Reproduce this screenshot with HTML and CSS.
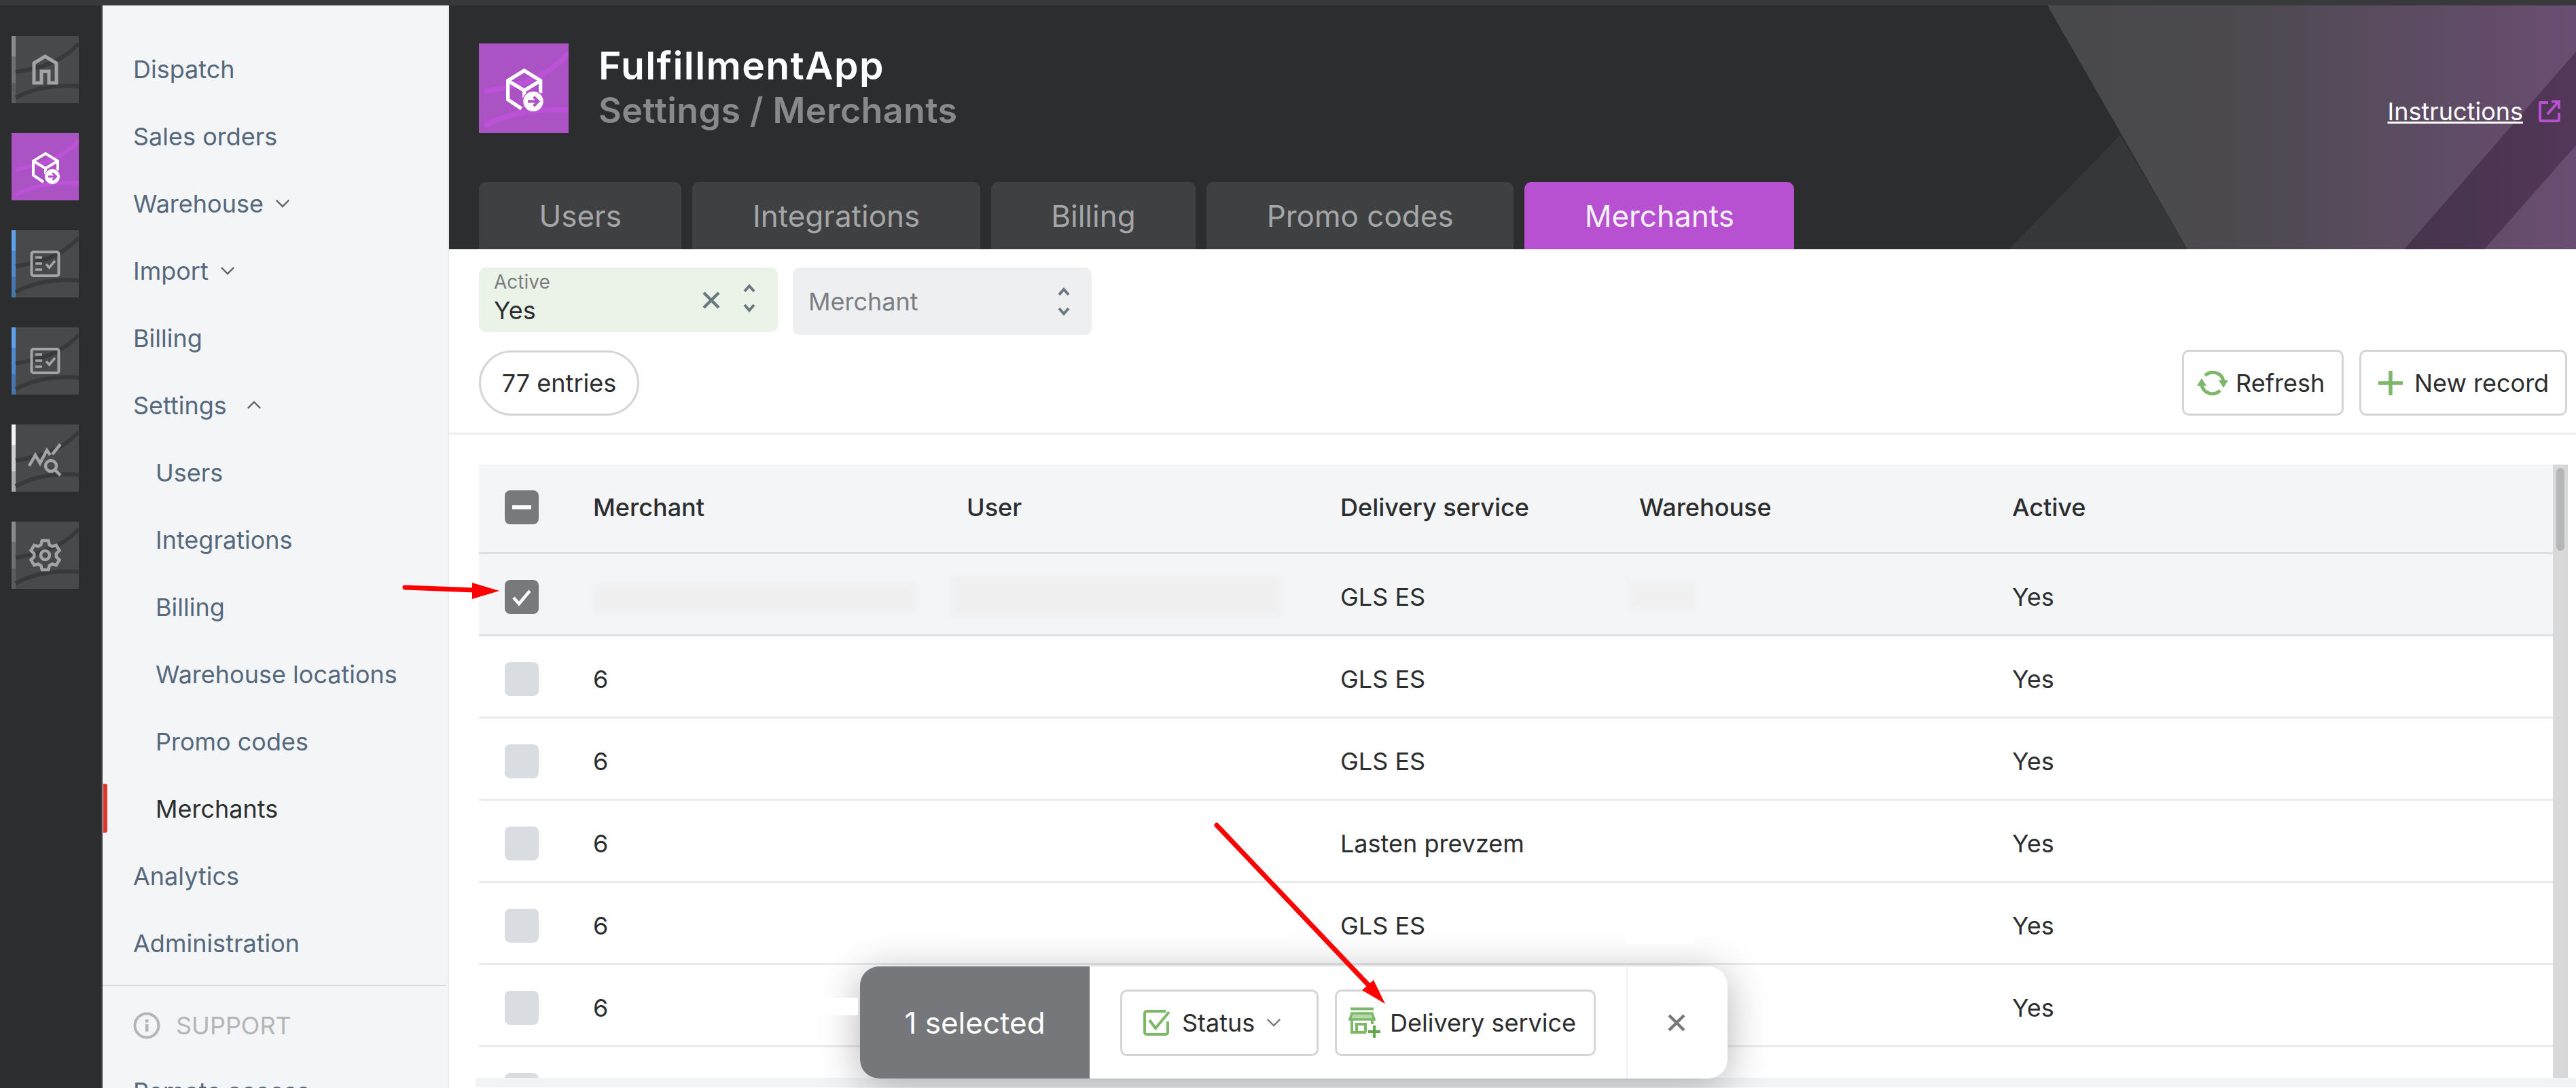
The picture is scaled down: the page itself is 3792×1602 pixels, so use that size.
FILE: index.html
```html
<!DOCTYPE html>
<html lang="en">
<head>
    <meta charset="utf-8">
    <title>FulfillmentApp - Settings / Merchants</title>
    <link rel="stylesheet" href="styles.css">
</head>
<body>
    <svg class="defs" width="0" height="0">
        <symbol id="waves" viewBox="0 0 99 99">
            <path d="M6 53 C40 48 72 40 99 11" fill="none" stroke-width="6"/>
            <path d="M6 91 C32 77 62 71 99 74" fill="none" stroke-width="6"/>
        </symbol>
        <symbol id="i-home" viewBox="0 0 99 99">
            <path d="M33 69 V40 L49.5 30 L66 40 V69 H55 V52 H44 V69 Z" fill="none" stroke="currentColor" stroke-width="5"/>
        </symbol>
        <symbol id="i-box" viewBox="0 0 99 99">
            <path d="M47 72 L32 62 V41 L50 30 L68 41 V55 M32 41 L50 52 L68 41 M50 52 V60" fill="none" stroke="currentColor" stroke-width="4"/>
            <circle cx="60" cy="64" r="11.5" fill="currentColor"/>
            <path d="M54 64 H65 M60.500 59 L65.500 64 L60.500 69" fill="none" class="box-arrow" stroke-width="3"/>
        </symbol>
        <symbol id="i-report" viewBox="0 0 99 99">
            <rect x="29.500" y="32" width="40" height="35" rx="3" fill="none" stroke="currentColor" stroke-width="4"/>
            <path d="M35 40 H45 M35 49 H45 M35 58 H45 M51 50 L55.500 55 L64 45" fill="none" stroke="currentColor" stroke-width="3.500"/>
        </symbol>
        <symbol id="i-chart" viewBox="0 0 99 99">
            <path d="M26 61 L35 45 L42 57 L52 38 L57 45 M60 44 L72 29 M64 67 L72 75" fill="none" stroke="currentColor" stroke-width="4.500"/>
            <circle cx="58" cy="61" r="8" fill="none" stroke="currentColor" stroke-width="4.500"/>
        </symbol>
        <symbol id="i-gear" viewBox="0 0 99 99">
            <g transform="translate(49.500 49.500)" fill="none" stroke="currentColor" stroke-width="4.500">
                <path d="M-6.200 -15.300 L-4.600 -21.500 L4.600 -21.500 L6.200 -15.300 L10.200 -13 L16.300 -14.700 L20.900 -6.800 L16.300 -2.300 L16.300 2.300 L20.900 6.800 L16.300 14.700 L10.200 13 L6.200 15.300 L4.600 21.500 L-4.600 21.500 L-6.200 15.300 L-10.200 13 L-16.300 14.700 L-20.900 6.800 L-16.300 2.300 L-16.300 -2.300 L-20.900 -6.800 L-16.300 -14.700 L-10.200 -13 Z"/>
                <circle r="6.500"/>
            </g>
        </symbol>
        <symbol id="i-down" viewBox="0 0 24 14">
            <path d="M2 2 L12 12 L22 2" fill="none" stroke="currentColor" stroke-width="2.500"/>
        </symbol>
        <symbol id="i-up" viewBox="0 0 24 14">
            <path d="M2 12 L12 2 L22 12" fill="none" stroke="currentColor" stroke-width="2.500"/>
        </symbol>
        <symbol id="i-x" viewBox="0 0 28 28">
            <path d="M3 3 L25 25 M25 3 L3 25" fill="none" stroke="currentColor" stroke-width="4.500"/>
        </symbol>
        <symbol id="i-updown" viewBox="0 0 20 44">
            <path d="M3 12 L10 4 L17 12 M3 32 L10 40 L17 32" fill="none" stroke="currentColor" stroke-width="4"/>
        </symbol>
    </svg>

    <div class="topbar"></div>
    <div class="app">
        <div class="rail">
            <div class="tile strip-grey"><svg class="wave"><use href="#waves"/></svg><svg class="tile-icon"><use href="#i-home"/></svg></div>
            <div class="tile tile-active"><svg class="wave"><use href="#waves"/></svg><svg class="tile-icon"><use href="#i-box"/></svg></div>
            <div class="tile strip-blue"><svg class="wave"><use href="#waves"/></svg><svg class="tile-icon"><use href="#i-report"/></svg></div>
            <div class="tile strip-blue"><svg class="wave"><use href="#waves"/></svg><svg class="tile-icon"><use href="#i-report"/></svg></div>
            <div class="tile strip-white"><svg class="wave"><use href="#waves"/></svg><svg class="tile-icon"><use href="#i-chart"/></svg></div>
            <div class="tile strip-grey"><svg class="wave"><use href="#waves"/></svg><svg class="tile-icon"><use href="#i-gear"/></svg></div>
        </div>

        <nav class="sidebar">
            <div class="nav-item">Dispatch</div>
            <div class="nav-item">Sales orders</div>
            <div class="nav-item">Warehouse <svg class="chev"><use href="#i-down"/></svg></div>
            <div class="nav-item">Import <svg class="chev"><use href="#i-down"/></svg></div>
            <div class="nav-item">Billing</div>
            <div class="nav-item">Settings <svg class="chev chev-open"><use href="#i-up"/></svg></div>
            <div class="nav-item sub">Users</div>
            <div class="nav-item sub">Integrations</div>
            <div class="nav-item sub">Billing</div>
            <div class="nav-item sub">Warehouse locations</div>
            <div class="nav-item sub">Promo codes</div>
            <div class="nav-item sub current">Merchants</div>
            <div class="nav-item">Analytics</div>
            <div class="nav-item">Administration</div>
            <div class="nav-divider"></div>
            <div class="nav-item nav-support">
                <svg class="info" viewBox="0 0 40 40">
                    <circle cx="20" cy="20" r="17.500" fill="none" stroke="currentColor" stroke-width="4"/>
                    <rect x="18" y="18" width="4.500" height="11" fill="currentColor"/>
                    <rect x="18" y="11" width="4.500" height="4.500" fill="currentColor"/>
                </svg>
                SUPPORT
            </div>
            <div class="nav-item">Remote access</div>
        </nav>

        <main class="content">
            <header class="header">
                <svg class="header-art" viewBox="0 0 3131 359">
                    <defs>
                        <linearGradient id="art-light" gradientUnits="userSpaceOnUse" x1="2353" y1="0" x2="3131" y2="0">
                            <stop offset="0" stop-color="#48494b"/>
                            <stop offset="0.35" stop-color="#4c4a4f"/>
                            <stop offset="1" stop-color="#6a4d72"/>
                        </linearGradient>
                        <linearGradient id="art-stripe" gradientUnits="userSpaceOnUse" x1="2878" y1="0" x2="3131" y2="0">
                            <stop offset="0" stop-color="#45344a"/>
                            <stop offset="1" stop-color="#533759"/>
                        </linearGradient>
                    </defs>
                    <polygon points="2460,191 2296,359 2559,359" fill="#363739"/>
                    <polygon points="2353,0 3131,0 3131,359 2559,359" fill="url(#art-light)"/>
                    <polygon points="2878,359 2996,359 3131,206 3131,68" fill="url(#art-stripe)"/>
                </svg>
                <div class="brand">
                    <div class="brand-icon">
                        <svg class="wave"><use href="#waves"/></svg>
                        <svg class="tile-icon"><use href="#i-box"/></svg>
                    </div>
                    <div class="brand-text">
                        <div class="app-name">FulfillmentApp</div>
                        <div class="crumb">Settings / Merchants</div>
                    </div>
                    <a class="instructions" href="#">Instructions</a>
                    <svg class="ext" viewBox="0 0 32 33">
                        <path d="M14 4 H3 A1 1 0 0 0 2 5 V29 A2 2 0 0 0 4 31 H28 A2 2 0 0 0 30 29 V19 M13 21 L29 3 M19 2.500 H30 V13" fill="none" stroke="currentColor" stroke-width="4"/>
                    </svg>
                </div>
                <div class="tabs">
                    <div class="tab">Users</div>
                    <div class="tab">Integrations</div>
                    <div class="tab">Billing</div>
                    <div class="tab">Promo codes</div>
                    <div class="tab tab-active">Merchants</div>
                </div>
            </header>

            <div class="filters">
                <div class="filter filter-set">
                    <div class="filter-text">
                        <div class="filter-label">Active</div>
                        <div class="filter-value">Yes</div>
                    </div>
                    <svg class="filter-x"><use href="#i-x"/></svg>
                    <svg class="filter-caret"><use href="#i-updown"/></svg>
                </div>
                <div class="filter filter-empty">
                    <div class="filter-text">Merchant</div>
                    <svg class="filter-caret"><use href="#i-updown"/></svg>
                </div>
            </div>

            <div class="toolbar">
                <div class="entries">77 entries</div>
                <div class="actions">
                    <button class="btn btn-refresh">
                        <svg class="btn-icon" viewBox="0 0 44 38">
                            <path d="M11 8 A16 16 0 0 1 38 16 M33 30 A16 16 0 0 1 6 22" fill="none" stroke="currentColor" stroke-width="5"/>
                            <path d="M31 15 L45 15 L38 26 Z M-1 23 L13 23 L6 12 Z" fill="currentColor"/>
                        </svg>
                        Refresh
                    </button>
                    <button class="btn btn-new">
                        <svg class="btn-plus" viewBox="0 0 36 36">
                            <path d="M18 0 V36 M0 18 H36" fill="none" stroke="currentColor" stroke-width="5.500"/>
                        </svg>
                        New record
                    </button>
                </div>
            </div>

            <div class="table-wrap">
                <div class="table">
                    <div class="row row-head">
                        <div class="cell"><span class="check check-on"><span class="minus"></span></span></div>
                        <div class="cell">Merchant</div>
                        <div class="cell">User</div>
                        <div class="cell">Delivery service</div>
                        <div class="cell">Warehouse</div>
                        <div class="cell">Active</div>
                    </div>
                    <div class="row row-selected">
                        <div class="cell">
                            <span class="check check-on">
                                <svg viewBox="0 0 50 50"><path d="M13 26 L21 35 L37 16" fill="none" stroke="#fff" stroke-width="4.500"/></svg>
                            </span>
                        </div>
                        <div class="cell"><span class="smudge smudge-merchant"></span></div>
                        <div class="cell"><span class="smudge smudge-user"></span></div>
                        <div class="cell">GLS ES</div>
                        <div class="cell"><span class="smudge smudge-wh"></span></div>
                        <div class="cell">Yes</div>
                    </div>
                    <div class="row">
                        <div class="cell"><span class="check"></span></div>
                        <div class="cell">6</div><div class="cell"></div><div class="cell">GLS ES</div><div class="cell"></div><div class="cell">Yes</div>
                    </div>
                    <div class="row">
                        <div class="cell"><span class="check"></span></div>
                        <div class="cell">6</div><div class="cell"></div><div class="cell">GLS ES</div><div class="cell"></div><div class="cell">Yes</div>
                    </div>
                    <div class="row">
                        <div class="cell"><span class="check"></span></div>
                        <div class="cell">6</div><div class="cell"></div><div class="cell">Lasten prevzem</div><div class="cell"></div><div class="cell">Yes</div>
                    </div>
                    <div class="row">
                        <div class="cell"><span class="check"></span></div>
                        <div class="cell">6</div><div class="cell"></div><div class="cell">GLS ES</div><div class="cell"></div><div class="cell">Yes</div>
                    </div>
                    <div class="row">
                        <div class="cell"><span class="check"></span></div>
                        <div class="cell">6</div><div class="cell"></div><div class="cell"></div><div class="cell"></div><div class="cell">Yes</div>
                    </div>
                    <div class="row">
                        <div class="cell"><span class="check"></span></div>
                    </div>
                </div>
                <div class="scrollbar"><div class="scroll-thumb"></div></div>
            </div>
            <div class="table-foot"></div>

            <div class="selection-bar">
                <div class="selection-count">1 selected</div>
                <div class="selection-actions">
                    <button class="btn btn-status">
                        <svg class="status-icon" viewBox="0 0 40 40">
                            <path d="M33 3 H5 A3 3 0 0 0 2 6 V34 A3 3 0 0 0 5 37 H33 A3 3 0 0 0 36 34 V18" fill="none" stroke="currentColor" stroke-width="4"/>
                            <path d="M9 16 L18 28 L38 4" fill="none" stroke="currentColor" stroke-width="4"/>
                        </svg>
                        Status
                        <svg class="status-chev"><use href="#i-down"/></svg>
                    </button>
                    <button class="btn btn-delivery">
                        <svg class="store-icon" viewBox="0 0 50 46">
                            <path d="M4 2.500 H38" fill="none" stroke="currentColor" stroke-width="4"/>
                            <path d="M3 18 L6 9 H36 L39 18 Z" fill="#b5d8aa" stroke="currentColor" stroke-width="3.500"/>
                            <path d="M6 19 V37 H27 M36 19 V25 M13 37 V25 H26 V37" fill="none" stroke="currentColor" stroke-width="4"/>
                            <path d="M39 27 V45 M30 36 H48" fill="none" stroke="#5fa84c" stroke-width="4"/>
                        </svg>
                        Delivery service
                    </button>
                </div>
                <div class="selection-close"><svg class="close-x"><use href="#i-x"/></svg></div>
            </div>
        </main>
    </div>

    <!-- annotations drawn on top of the screenshot -->
    <svg class="marks" viewBox="0 0 3792 1602">
        <g fill="#fff">
            <rect x="926" y="1469" width="337" height="26"/>
            <rect x="1415" y="1332" width="483" height="48"/>
            <rect x="2394" y="1345" width="101" height="45"/>
        </g>
        <g fill="#f00" stroke="#f00">
            <line x1="596" y1="865" x2="700" y2="869" stroke-width="7" stroke-linecap="round"/>
            <polygon points="695,858 735,870 695,882" stroke-width="0"/>
            <line x1="1791" y1="1215" x2="2014" y2="1450" stroke-width="7" stroke-linecap="round"/>
            <polygon points="2039,1478 2005,1458 2022,1443" stroke-width="0"/>
        </g>
    </svg>
</body>
</html>
```

FILE: styles.css
```css
* {
    box-sizing: border-box;
}

html, body {
    margin: 0;
    width: 3792px;
    height: 1602px;
    overflow: hidden;
}

body {
    position: relative;
    font-family: Inter, "Liberation Sans", sans-serif;
    font-size: 36px;
    color: #2c2d2f;
    background: #fff;
}

.defs {
    position: absolute;
}

.topbar {
    height: 8px;
    background: #38393b;
}

.app {
    display: flex;
    height: 1594px;
}

/* left rail */
.rail {
    width: 151px;
    flex: none;
    padding: 45px 0 0 17px;
    display: flex;
    flex-direction: column;
    gap: 44px;
    background: #2c2d2f;
    border-right: 2px solid #3f4042;
}

.tile {
    position: relative;
    width: 99px;
    height: 99px;
    background: #48494b;
    color: #a3a4a6;
    stroke: #39393b;
}

.tile::before {
    content: "";
    position: absolute;
    left: 0;
    top: 0;
    width: 6px;
    height: 99px;
}

.strip-grey::before {
    background: linear-gradient(#8a8b8d 30%, #6f7072 30%, #6f7072 70%, #5c5d5f 70%);
}

.strip-blue::before {
    background: linear-gradient(#5fa2ef 30%, #4f8ad0 30%, #4f8ad0 70%, #4676b0 70%);
}

.strip-white::before {
    background: linear-gradient(#f4f4f4 30%, #cfcfd0 30%, #cfcfd0 70%, #a9aaab 70%);
}

.tile-active {
    background: #ab52c4;
    color: #fff;
    stroke: #bb52d8;
}

.wave, .tile-icon {
    position: absolute;
    left: 0;
    top: 0;
    width: 100%;
    height: 100%;
}

.box-arrow {
    stroke: #ab52c4;
}

/* sidebar */
.sidebar {
    width: 510px;
    flex: none;
    padding-top: 44px;
    overflow: hidden;
    background: #f3f5f7;
    border-right: 2px solid #e9ebed;
}

.nav-item {
    position: relative;
    display: flex;
    align-items: center;
    height: 99px;
    padding-left: 45px;
    color: #56687b;
}

.nav-item.sub {
    padding-left: 78px;
}

.nav-item.current {
    color: #2c2d2f;
}

.nav-item.current::before {
    content: "";
    position: absolute;
    left: 1px;
    top: 13px;
    width: 6px;
    height: 72px;
    border-radius: 0 3px 3px 0;
    background: #e0352b;
}

.chev {
    width: 22px;
    height: 13px;
    margin-left: 17px;
    color: #5f6265;
}

.chev-open {
    margin-left: 29px;
}

.nav-divider {
    height: 2px;
    margin: 12px 2px 11px 0;
    background: #d9dbdd;
}

.nav-support {
    height: 94px;
    color: #b3b5b7;
}

.info {
    width: 40px;
    height: 40px;
    margin-right: 23px;
}

/* content column */
.content {
    position: relative;
    flex: 1;
    min-width: 0;
}

.header {
    position: relative;
    height: 359px;
    padding: 56px 0 0 44px;
    background: #2c2d2f;
    overflow: hidden;
}

.header-art {
    position: absolute;
    left: 0;
    top: 0;
    width: 100%;
    height: 100%;
}

.brand {
    position: relative;
    display: flex;
    align-items: center;
    height: 132px;
}

.brand-icon {
    position: relative;
    width: 132px;
    height: 132px;
    flex: none;
    background: #ab52c4;
    color: #fff;
    stroke: #bb52d8;
}

.brand-text {
    flex: 1;
    margin-left: 44px;
    font-weight: 600;
    line-height: 66px;
}

.app-name {
    font-size: 57px;
    letter-spacing: 1.4px;
    color: #fff;
}

.crumb {
    font-size: 52px;
    letter-spacing: 0.4px;
    color: #88898b;
}

.instructions {
    color: #fff;
    margin-top: 68px;
}

.ext {
    width: 32px;
    height: 33px;
    margin: 66px 23px 0 23px;
    color: #b850d2;
}

.tabs {
    position: relative;
    display: flex;
    gap: 16px;
    margin-top: 72px;
}

.tab {
    height: 99px;
    padding: 0 88.5px;
    display: flex;
    align-items: center;
    font-size: 44px;
    color: #a5a6a8;
    background: #3f4042;
    border-radius: 10px 10px 0 0;
}

.tab-active {
    color: #f2f2f2;
    background: #b850d2;
}

/* filters */
.filters {
    display: flex;
    align-items: flex-start;
    gap: 22px;
    padding: 27px 0 0 44px;
}

.filter {
    display: flex;
    align-items: center;
    width: 440px;
    border-radius: 10px;
}

.filter-set {
    height: 95px;
    padding: 0 32px 6px 22px;
    background: #ebf3e9;
}

.filter-empty {
    height: 99px;
    padding: 0 31px 0 23px;
    background: #eeeff1;
    color: #7b7e82;
}

.filter-text {
    flex: 1;
}

.filter-label {
    font-size: 28px;
    line-height: 36px;
    color: #7b7c7e;
}

.filter-value {
    line-height: 48px;
}

.filter-x {
    width: 28px;
    height: 28px;
    margin-right: 32px;
    margin-top: 6px;
    color: #6c7880;
}

.filter-caret {
    width: 20px;
    height: 44px;
    color: #6c7880;
}

/* entries and buttons */
.toolbar {
    display: flex;
    align-items: center;
    justify-content: space-between;
    height: 124px;
    padding: 0 13px 26px 44px;
    margin-top: 23px;
    border-bottom: 3px solid #eeeff0;
}

.entries {
    width: 236px;
    height: 96px;
    line-height: 90px;
    text-align: center;
    border: 3px solid #d5d5d5;
    border-radius: 48px;
}

.actions {
    display: flex;
    gap: 23px;
}

.btn {
    display: flex;
    align-items: center;
    height: 97px;
    padding: 0;
    font: inherit;
    color: #2c2d2f;
    background: #fff;
    border: 3px solid #d5d5d5;
    border-radius: 10px;
}

.btn-refresh {
    width: 238px;
    padding-left: 20px;
}

.btn-new {
    width: 306px;
    padding-left: 25px;
}

.btn-icon {
    width: 44px;
    height: 38px;
    margin-right: 12px;
    color: #7cb868;
    overflow: visible;
}

.btn-plus {
    width: 36px;
    height: 36px;
    margin-right: 17px;
    color: #7cb868;
}

/* table */
.table-wrap {
    display: flex;
    height: 903px;
    margin: 44px 12px 0 44px;
    overflow: hidden;
}

.table {
    flex: 1;
    min-width: 0;
}

.row {
    display: grid;
    grid-template-columns: 168px 550px 550px 440px 549px 1fr;
    height: 121px;
    padding-top: 8px;
    border-bottom: 3px solid #e9ebee;
}

.row-head {
    height: 132px;
    padding-top: 0;
    background: #f3f5f7;
    border-bottom-color: #dcdfe2;
}

.row-selected {
    background: #f3f5f7;
    border-bottom-color: #dfe4e3;
}

.cell {
    display: flex;
    align-items: center;
    min-width: 0;
}

.row-head .cell {
    font-weight: 500;
    padding-bottom: 3px;
}

.check {
    display: flex;
    align-items: center;
    justify-content: center;
    width: 50px;
    height: 50px;
    margin-left: 38px;
    border-radius: 8px;
    background: #d9dde1;
}

.check-on {
    background: #78797b;
}

.minus {
    width: 28px;
    height: 6px;
    background: #fff;
}

.smudge {
    display: block;
    background: #f0f0f1;
    filter: blur(3px);
}

.smudge-merchant {
    width: 474px;
    height: 42px;
    margin-top: 6px;
}

.smudge-user {
    width: 485px;
    height: 58px;
    margin-left: -21px;
    margin-top: -4px;
}

.smudge-wh {
    width: 97px;
    height: 40px;
    margin-left: -14px;
    margin-top: -4px;
}

.scrollbar {
    width: 22px;
    flex: none;
    padding: 5px 5px 0;
    background: #d9d9da;
}

.scroll-thumb {
    height: 122px;
    border-radius: 6px;
    background: #b5b6b7;
}

.table-foot {
    height: 14px;
    margin-left: 39px;
    background: #f1f3f5;
}

/* bulk action bar */
.selection-bar {
    position: absolute;
    left: 605px;
    bottom: 14px;
    display: flex;
    width: 1277px;
    height: 165px;
    background: #fff;
    border-radius: 28px;
    box-shadow: 0 10px 60px rgba(0, 0, 0, 0.3);
}

.selection-count {
    width: 338px;
    display: flex;
    align-items: center;
    justify-content: center;
    font-size: 44px;
    color: #fff;
    background: #76777a;
    border-radius: 28px 0 0 28px;
}

.selection-actions {
    display: flex;
    align-items: center;
    gap: 24px;
    padding: 0 45px;
    border-right: 2px solid #eeeff0;
}

.btn-status {
    width: 292px;
    height: 98px;
    padding-left: 31px;
}

.status-icon {
    width: 40px;
    height: 40px;
    margin-right: 17px;
    color: #7cb868;
}

.status-chev {
    width: 22px;
    height: 13px;
    margin-left: 17px;
    color: #77787a;
}

.btn-delivery {
    width: 384px;
    height: 98px;
    padding-left: 16px;
}

.store-icon {
    width: 50px;
    height: 46px;
    margin-right: 12px;
    color: #7cb868;
}

.selection-close {
    flex: 1;
    display: flex;
    align-items: center;
    justify-content: center;
    padding-right: 4px;
}

.close-x {
    width: 28px;
    height: 28px;
    color: #77787a;
}

/* red arrows */
.marks {
    position: absolute;
    left: 0;
    top: 0;
    width: 3792px;
    height: 1602px;
    pointer-events: none;
}
```
